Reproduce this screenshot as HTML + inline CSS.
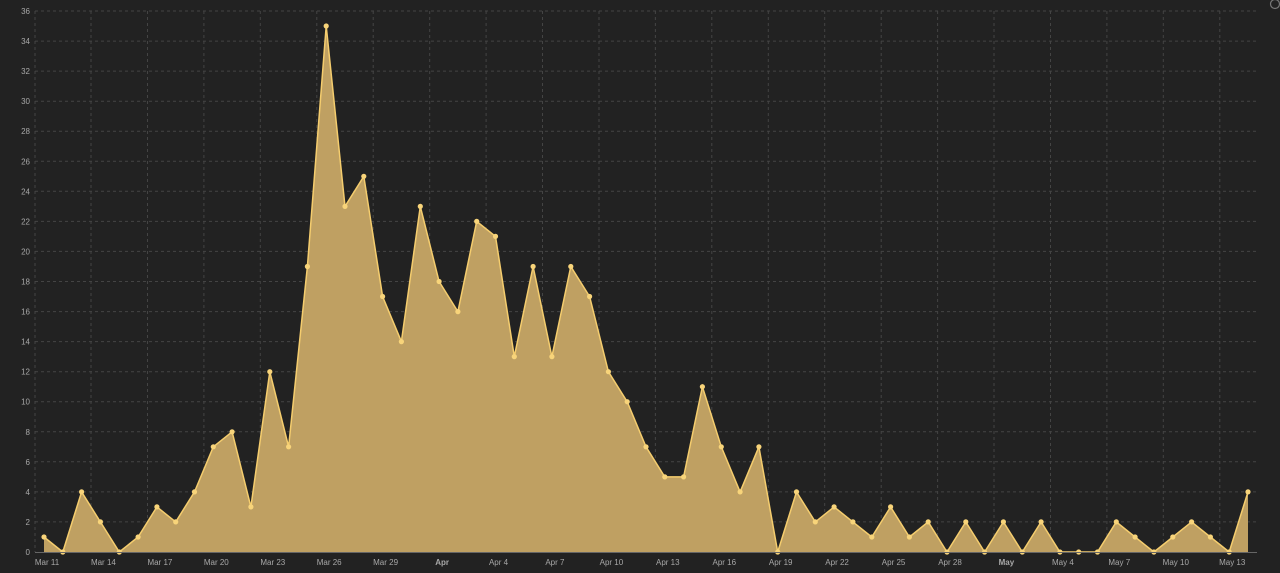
<!DOCTYPE html>
<html><head><meta charset="utf-8"><style>
html,body{margin:0;padding:0;background:#222;width:1280px;height:573px;overflow:hidden}
svg{display:block}
text{font-family:"Liberation Sans",sans-serif;font-size:8px;fill:#a8a8a8}
</style></head><body>
<svg id="s" width="1280" height="573" xmlns="http://www.w3.org/2000/svg"></svg>
<script>
const d=[1,0,4,2,0,1,3,2,4,7,8,3,12,7,19,35,23,25,17,14,23,18,16,22,21,13,19,13,19,17,12,10,7,5,5,11,7,4,7,0,4,2,3,2,1,3,1,2,0,2,0,2,0,2,0,0,0,2,1,0,1,2,1,0,4];
const x0=44,dx=18.8125,y0=552,u=541/36;
const X=i=>x0+i*dx,Y=v=>y0-v*u;
let h='';
for(let v=2;v<=36;v+=2){const y=Y(v).toFixed(1);h+=`<line x1="35" x2="1257" y1="${y}" y2="${y}" stroke="#444" stroke-dasharray="3,3"/>`;
h+=`<text x="30" y="${+y+3}" text-anchor="end">${v}</text>`;}
h+=`<text x="30" y="555" text-anchor="end">0</text>`;
h+=`<line x1="35" x2="35" y1="11" y2="552" stroke="#444" stroke-dasharray="3,3"/>`;
for(let k=0;k<21;k++){const x=X(2.5+3*k).toFixed(1);h+=`<line x1="${x}" x2="${x}" y1="11" y2="552" stroke="#444" stroke-dasharray="3,3"/>`;}
let p=d.map((v,i)=>`${X(i).toFixed(1)},${Y(v).toFixed(1)}`).join(' ');
h+=`<polygon points="${X(0)},${y0} ${p} ${X(64)},${y0}" fill="#bfa062"/>`;
h+=`<polyline points="${p}" fill="none" stroke="#f5cd6e" stroke-width="1.5"/>`;
d.forEach((v,i)=>{h+=`<circle cx="${X(i).toFixed(1)}" cy="${Y(v).toFixed(1)}" r="2.6" fill="#f8d47a"/>`;});
h+=`<line x1="35" x2="1257" y1="552.5" y2="552.5" stroke="#666"/>`;
const labs=['Mar 11','Mar 14','Mar 17','Mar 20','Mar 23','Mar 26','Mar 29','Apr','Apr 4','Apr 7','Apr 10','Apr 13','Apr 16','Apr 19','Apr 22','Apr 25','Apr 28','May','May 4','May 7','May 10','May 13'];
labs.forEach((l,k)=>{const b=(l=='Apr'||l=='May');h+=`<text x="${(X(3*k)+3).toFixed(1)}" y="565" text-anchor="middle"${b?' font-weight="bold"':''}>${l}</text>`;});
h+=`<circle cx="1275" cy="4" r="4.5" fill="none" stroke="#777" stroke-width="1.2"/>`;
document.getElementById('s').innerHTML=h;
</script>
</body></html>
